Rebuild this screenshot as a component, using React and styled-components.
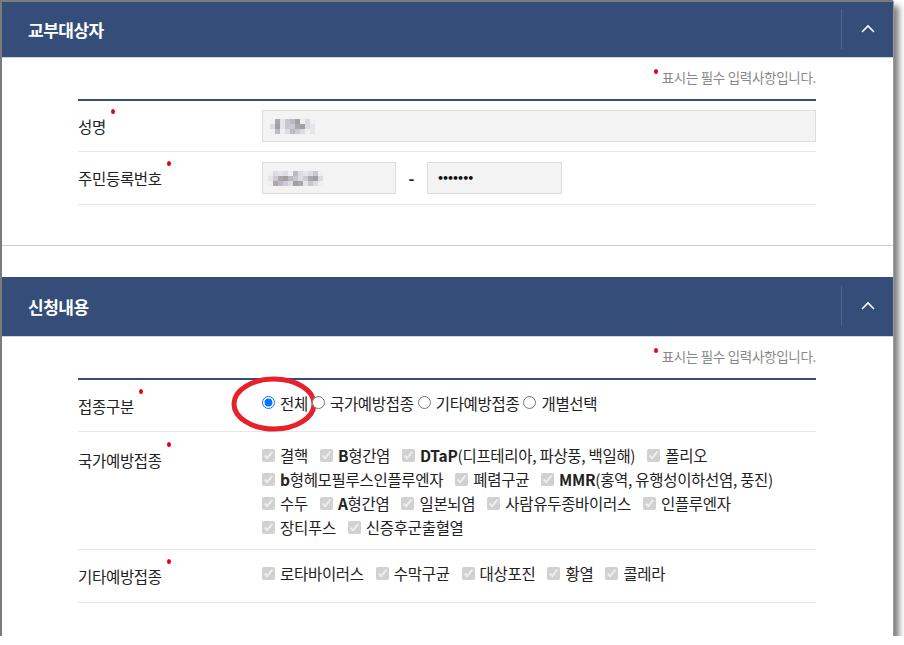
import React from 'react';
import styled, { createGlobalStyle } from 'styled-components';

const GlobalStyle = createGlobalStyle`
  html, body {
    margin: 0;
    padding: 0;
    background: #fff;
  }
  body {
    font-family: "Noto Sans CJK KR", "Noto Sans", sans-serif;
    color: #333;
  }
`;

const Window = styled.div`
  width: 891px;
  height: 634px;
  border-top: 2px solid #7b7b7b;
  border-left: 2px solid #7b7b7b;
  background: #fff;
  box-shadow: 1px 1px 0 #9a9a9a, 6px 6px 6px rgba(0, 0, 0, 0.5);
  overflow: hidden;
`;

const Section = styled.section`
  padding-bottom: ${(p) => (p.$divided ? '40px' : '0')};
  border-bottom: ${(p) => (p.$divided ? '1px solid #d0d0d0' : 'none')};
  margin-bottom: ${(p) => (p.$divided ? '31px' : '0')};
`;

const Header = styled.div`
  display: flex;
  align-items: center;
  height: ${(p) => p.$h}px;
  background: #344d79;
  border-bottom: 1px solid #cfd3da;
`;

const Title = styled.h2`
  flex: 1;
  margin: 0;
  padding-left: 26px;
  font-size: 17px;
  font-weight: 700;
  color: #fff;
  letter-spacing: -0.5px;
`;

const Toggle = styled.button`
  display: flex;
  align-items: center;
  justify-content: center;
  width: 52px;
  height: 40px;
  margin-top: -2px;
  padding: 0;
  border: 0;
  border-left: 1px solid rgba(255, 255, 255, 0.14);
  background: transparent;
  cursor: pointer;
`;

const Body = styled.div`
  padding: 0 77px 0 76px;
`;

const Note = styled.p`
  margin: 10px 0 13px;
  text-align: right;
  font-size: 13.5px;
  line-height: 18px;
  color: #888;
  letter-spacing: -0.3px;
`;

const NoteDot = styled.span`
  display: inline-block;
  width: 4px;
  height: 5px;
  margin-right: 4px;
  border-radius: 50%;
  background: #e60012;
  vertical-align: 9px;
`;

const Table = styled.div`
  border-top: 2px solid #344d79;
`;

const Row = styled.div`
  display: grid;
  grid-template-columns: 184px 1fr;
  align-items: ${(p) => (p.$top ? 'start' : 'center')};
  min-height: ${(p) => p.$h}px;
  border-bottom: 1px solid #e8e8e8;
`;

const Label = styled.div`
  position: relative;
  display: inline-block;
  justify-self: start;
  padding-top: ${(p) => (p.$top ? '16px' : '0')};
  font-size: 15.5px;
  line-height: 24px;
  color: #222;
  letter-spacing: -0.3px;
`;

const Req = styled.span`
  position: absolute;
  right: -9px;
  top: ${(p) => (p.$top ? '10px' : '-5px')};
  width: 4px;
  height: 5px;
  border-radius: 50%;
  background: #e60012;
`;

const Field = styled.div`
  display: flex;
  align-items: center;
`;

const Input = styled.div`
  box-sizing: border-box;
  display: flex;
  align-items: center;
  width: ${(p) => p.$w};
  height: 32px;
  padding-left: ${(p) => p.$pad || 7}px;
  background: #f3f3f3;
  border: 1px solid #dcdcdc;
`;

const Dash = styled.span`
  width: 31px;
  text-align: center;
  font-size: 16px;
  font-weight: 700;
  color: #222;
`;

const Secret = styled.span`
  font-family: "DejaVu Sans", sans-serif;
  font-size: 11px;
  font-weight: 700;
  letter-spacing: -2px;
  color: #111;
`;

const Mosaic = styled.div`
  display: grid;
  grid-template-columns: repeat(${(p) => p.$cols}, 5px);
  grid-auto-rows: 5px;
`;

const Cell = styled.span`
  background: ${(p) => p.$c};
`;

const RadioGroup = styled.div`
  display: flex;
  align-items: center;
  gap: 4px;
  margin-top: -6px;
  font-size: 15.5px;
  color: #222;
`;

const Option = styled.label`
  position: relative;
  display: flex;
  align-items: center;
  gap: 5px;
  letter-spacing: -0.3px;
`;

const Radio = styled.input`
  width: 13px;
  height: 13px;
  margin: 0;
`;

const Mark = styled.svg`
  position: absolute;
  left: -31px;
  top: -16px;
  pointer-events: none;
`;

const CheckList = styled.div`
  padding: ${(p) => (p.$single ? '0' : '11px 0 10px')};
  margin-top: ${(p) => (p.$single ? '-6px' : '0')};
`;

const CheckLine = styled.div`
  display: flex;
  align-items: center;
  gap: 12px;
  height: 24px;
`;

const Check = styled.label`
  display: flex;
  align-items: center;
  gap: 5px;
  font-size: 15.5px;
  color: #222;
  letter-spacing: -0.3px;
  white-space: nowrap;

  b {
    font-weight: 700;
  }
`;

const Box = styled.input`
  width: 13px;
  height: 13px;
  margin: 0;
`;

const Chevron = () => (
  <svg width="16" height="10" viewBox="0 0 16 10">
    <path d="M2 8 L8 2 L14 8" fill="none" stroke="#fff" strokeWidth="1.6" />
  </svg>
);

const palette = ['#a9a9ab', '#c9c6cd', '#dcdbe0', '#bcb8c4', '#e6e4e8', '#9f9fa4', '#cfc8d6', '#efeef0'];
const nameCells = [7, 0, 4, 1, 3, 5, 7, 2, 7, 2, 5, 4, 1, 6, 0, 5, 2, 4, 7, 3, 7, 2, 3, 6, 2, 7, 4];
const idCells = [7, 2, 4, 2, 7, 3, 2, 4, 2, 1, 7, 4, 6, 0, 5, 3, 1, 2, 6, 0, 5, 2, 7, 0, 3, 6, 2, 5, 0, 4, 1, 2, 7];

const Blur = ({ cells, cols }) => (
  <Mosaic $cols={cols}>
    {cells.map((c, i) => (
      <Cell key={i} $c={palette[c]} />
    ))}
  </Mosaic>
);

const national = [
  ['결핵', 'B형간염', 'DTaP(디프테리아, 파상풍, 백일해)', '폴리오'],
  ['b형헤모필루스인플루엔자', '폐렴구균', 'MMR(홍역, 유행성이하선염, 풍진)'],
  ['수두', 'A형간염', '일본뇌염', '사람유두종바이러스', '인플루엔자'],
  ['장티푸스', '신증후군출혈열'],
];

const others = ['로타바이러스', '수막구균', '대상포진', '황열', '콜레라'];

const ItemText = ({ text }) => {
  const m = text.match(/^([A-Za-z]+)(.*)$/);
  if (!m) return <span>{text}</span>;
  return (
    <span>
      <b>{m[1]}</b>
      {m[2]}
    </span>
  );
};

const CheckItem = ({ text }) => (
  <Check>
    <Box type="checkbox" checked disabled readOnly />
    <ItemText text={text} />
  </Check>
);

const SectionHead = ({ title, h }) => (
  <Header $h={h}>
    <Title>{title}</Title>
    <Toggle type="button" aria-label="접기">
      <Chevron />
    </Toggle>
  </Header>
);

const Required = () => (
  <Note>
    <NoteDot />
    표시는 필수 입력사항입니다.
  </Note>
);

const App = () => {
  return (
    <>
      <GlobalStyle />
      <Window>
        <Section $divided>
          <SectionHead title="교부대상자" h={55} />
          <Body>
            <Required />
            <Table>
              <Row $h={50}>
                <Label>
                  성명
                  <Req />
                </Label>
                <Field>
                  <Input $w="554px" $pad={7}>
                    <Blur cells={nameCells} cols={9} />
                  </Input>
                </Field>
              </Row>
              <Row $h={52}>
                <Label>
                  주민등록번호
                  <Req />
                </Label>
                <Field>
                  <Input $w="134px" $pad={5}>
                    <Blur cells={idCells} cols={11} />
                  </Input>
                  <Dash>-</Dash>
                  <Input $w="135px" $pad={9}>
                    <Secret>•••••••</Secret>
                  </Input>
                </Field>
              </Row>
            </Table>
          </Body>
        </Section>

        <Section>
          <SectionHead title="신청내용" h={59} />
          <Body>
            <Required />
            <Table>
              <Row $h={51}>
                <Label>
                  접종구분
                  <Req />
                </Label>
                <RadioGroup>
                  <Option>
                    <Radio type="radio" name="kind" defaultChecked />
                    전체
                    <Mark width="88" height="56" viewBox="0 0 88 56">
                      <ellipse cx="43" cy="28" rx="40" ry="25" fill="none" stroke="#e8202a" strokeWidth="5" />
                    </Mark>
                  </Option>
                  <Option>
                    <Radio type="radio" name="kind" />
                    국가예방접종
                  </Option>
                  <Option>
                    <Radio type="radio" name="kind" />
                    기타예방접종
                  </Option>
                  <Option>
                    <Radio type="radio" name="kind" />
                    개별선택
                  </Option>
                </RadioGroup>
              </Row>
              <Row $h={116} $top>
                <Label $top>
                  국가예방접종
                  <Req $top />
                </Label>
                <CheckList>
                  {national.map((line, i) => (
                    <CheckLine key={i}>
                      {line.map((t) => (
                        <CheckItem key={t} text={t} />
                      ))}
                    </CheckLine>
                  ))}
                </CheckList>
              </Row>
              <Row $h={52}>
                <Label>
                  기타예방접종
                  <Req />
                </Label>
                <CheckList $single>
                  <CheckLine>
                    {others.map((t) => (
                      <CheckItem key={t} text={t} />
                    ))}
                  </CheckLine>
                </CheckList>
              </Row>
            </Table>
          </Body>
        </Section>
      </Window>
    </>
  );
};

export default App;
